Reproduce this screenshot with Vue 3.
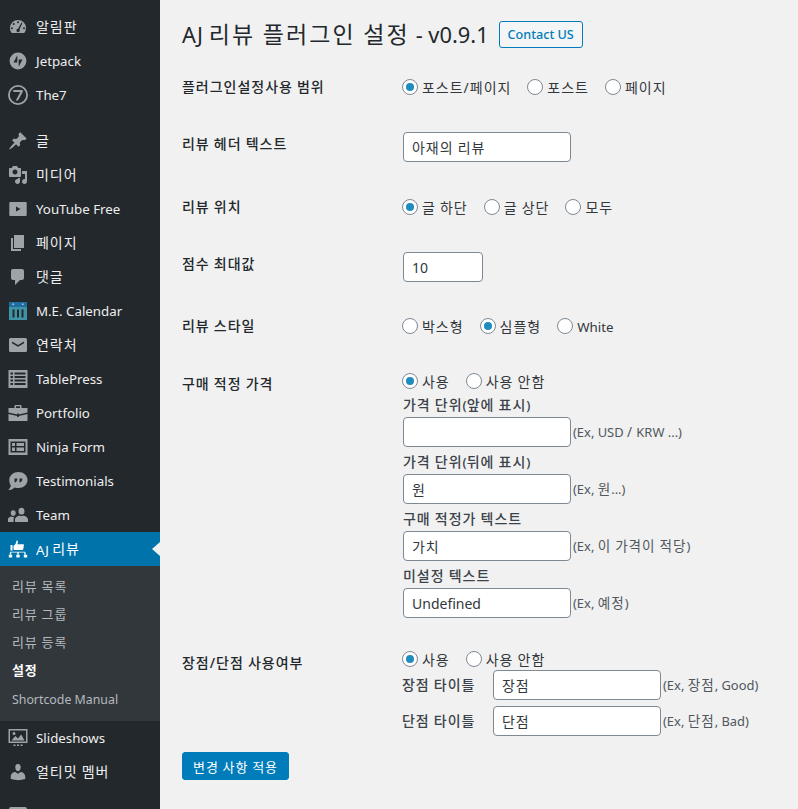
<script setup>
import { h } from 'vue'

const HAN = /([가-힣\/]+(?: [가-힣\/]+)*)/
const T = (props) => h('span', String(props.s).split(HAN).filter(Boolean).map((run) =>
  h('span', { class: HAN.test(run) ? 'han' : 'lat' }, run)
))
T.props = ['s']

const D = '#9ea3a8'
const menu = [
  { label: '알림판', icon: [{ d: 'M3.76 16h12.48A7.97 7.97 0 0 0 18 11a8 8 0 1 0-16 0c0 1.9.66 3.63 1.76 5zM10 4.2a1 1 0 1 1 0 2 1 1 0 0 1 0-2zM5.7 5.9a1 1 0 1 1 0 2 1 1 0 0 1 0-2zM4 10.2a1 1 0 1 1 0 2 1 1 0 0 1 0-2zM16 10.2a1 1 0 1 1 0 2 1 1 0 0 1 0-2zM13.5 5.6l.9.5-2.9 6.4a1.7 1.7 0 1 1-1.4-.7z' }] },
  { label: 'Jetpack', icon: [{ d: 'M10 1.6a8.4 8.4 0 1 0 0 16.800a8.4 8.4 0 0 0 0-16.800zM9.300 4.200v7.400H5.500zM10.700 15.800V8.400h3.800z' }] },
  { label: 'The7', icon: [{ d: 'M10 0a10 10 0 1 0 0 20a10 10 0 0 0 0-20zM10 1.800a8.200 8.200 0 1 1 0 16.400a8.200 8.200 0 0 1 0-16.400zM5.300 5h9.400v2L10 15.500H7.800L12.300 7H5.300z' }] },
  { label: '글', gap: true, icon: [{ d: 'M10.44 3.02l1.82-1.82 6.36 6.35-1.83 1.82c-1.05-.68-2.48-.57-3.41.36l-.75.75c-.92.93-1.04 2.35-.35 3.41l-1.83 1.82-2.41-2.41-2.8 2.79c-.42.42-3.38 2.71-3.8 2.29s1.86-3.39 2.28-3.81l2.79-2.79L4.1 9.36l1.83-1.82c1.05.69 2.48.57 3.4-.36l.75-.75c.93-.92 1.05-2.35.36-3.41z' }] },
  { label: '미디어', icon: [{ d: 'M13 11V4c0-.55-.45-1-1-1h-1.670L9 1H5L3.670 3H2c-.55 0-1 .45-1 1v7c0 .55.45 1 1 1h10c.55 0 1-.45 1-1zM7 4.500c1.380 0 2.500 1.120 2.500 2.500S8.380 9.500 7 9.500 4.500 8.380 4.500 7 5.620 4.500 7 4.500zM14 6h5v10.500c0 1.380-1.120 2.500-2.500 2.500S14 17.880 14 16.500s1.120-2.500 2.500-2.500c.17 0 .34.02.5.05V9h-3V6zm-4 8.050V13h2v3.500c0 1.380-1.120 2.500-2.500 2.500S7 17.880 7 16.500 8.120 14 9.500 14c.17 0 .34.02.5.05z' }] },
  { label: 'YouTube Free', icon: [{ d: 'M2.300 3h15.400a1 1 0 0 1 1 1v12a1 1 0 0 1-1 1H2.300a1 1 0 0 1-1-1V4a1 1 0 0 1 1-1zM8 7.500v5l4.500-2.500z' }] },
  { label: '페이지', icon: [{ d: 'M6 15V2h10v13H6zm-1 1h8v2H3V5h2v11z' }] },
  { label: '댓글', icon: [{ d: 'M5 2h9c1.100 0 2 .9 2 2v7c0 1.100-.9 2-2 2h-2l-5 5v-5H5c-1.100 0-2-.9-2-2V4c0-1.100.9-2 2-2z' }] },
  { label: 'M.E. Calendar', icon: [
    { d: 'M1 1h18v5H1z', fill: '#1f6da3' },
    { d: 'M1 6h18v13H1zM4.500 8.500v8h2v-8zM9 8.500v8h2v-8zM13.500 8.500v8h2v-8z', fill: '#3f93a6' },
    { d: 'M4.500 2.500h1.500v1.500H4.500zM14 2.500h1.500v1.500H14z', fill: '#b9d3e3' }
  ] },
  { label: '연락처', icon: [{ d: 'M2.500 3h15a1.500 1.500 0 0 1 1.500 1.500v11a1.500 1.500 0 0 1-1.500 1.500h-15A1.500 1.500 0 0 1 1 15.500v-11A1.500 1.500 0 0 1 2.500 3zM4 6.500v1.700l6 3.600 6-3.600V6.500l-6 3.400z' }] },
  { label: 'TablePress', icon: [{ d: 'M.5 1h19v18H.5zM2.500 3.500v2H5v-2zM6.500 3.500v2h11v-2zM2.500 7v2H5V7zM6.500 7v2h11V7zM2.500 10.500v2H5v-2zM6.500 10.500v2h11v-2zM2.500 14v2H5v-2zM6.500 14v2h11v-2z' }] },
  { label: 'Portfolio', icon: [{ d: 'M7.500 2h5a1 1 0 0 1 1 1v2H19.500v4.500L10.800 11.500v-1H9.200v1L.5 9.500V5h6V3a1 1 0 0 1 1-1zM8 3.300V5h4V3.300zM.5 11l8.700 2v1h1.600v-1L19.500 11v7H.5z' }] },
  { label: 'Ninja Form', icon: [{ d: 'M.5 2h19v16H.5zM2.500 4.500v11h15v-11zM8.500 6h7.500v3H8.500zM4 6h3v3H4zM4 10.500h3v3.500H4zM8.500 10.500h7.500v3.500H8.500z' }] },
  { label: 'Testimonials', icon: [{ d: 'M10.500 1c5 0 9 3.500 9 8s-4 8-9 8c-1.300 0-2.500-.2-3.600-.6C5 18 2.500 19 .3 19c1.300-1.300 2.300-3 2.500-4.600C1.700 13 1.300 11 1.300 9c0-4.500 4.200-8 9.200-8zM6.500 7.500v3.800h1.200c1-.8 1.600-2 1.600-3.800zM11.500 7.500v3.800h1.200c1-.8 1.600-2 1.600-3.800z' }] },
  { label: 'Team', icon: [{ d: 'M13.500 2.800a3 3.400 0 1 1 0 6.800a3 3.400 0 0 1 0-6.800zM7 17v-2.500c0-2.200 2.800-3.500 4.500-4 .8.700 3.200.7 4 0 1.700.5 4.500 1.800 4.500 4V17zM5.200 5.200a2.500 2.800 0 1 1 0 5.600a2.500 2.800 0 0 1 0-5.600zM0 17v-2.600c0-1.600 1.500-2.400 3.200-2.900.6.500 2.300.6 3.200.2C6 12.200 5.600 13 5.600 14.300V17z' }] },
  { label: 'AJ 리뷰', active: true, icon: [{ d: 'M8.500 1.500l1.200.3c.4 1 .1 2.200-.4 3.400h5.500c.8 0 1.200.5 1.200 1.100s-.3.900-.6 1.100c.4.300.5.700.4 1.100-.1.400-.3.700-.7.900.2.300.3.700.1 1.100-.2.300-.4.500-.8.600H6.800c-.9 0-1.300-.4-1.300-1V6.800c1.700-.9 2.800-3 3-5.300zM2.500 6h2v5.500h-2zM2.300 12.700H17v.9H2.300zM1.800 13.600h1.400v1.900H1.800zM9.300 13.600h1.400v1.900H9.300zM16.300 13.600h1.400v1.900h-1.400zM.8 15.800h3.400v2.700H.8zM8.300 15.800h3.400v2.700H8.300zM15.800 15.800h3.400v2.700h-3.400z', fill: '#fff' }] },
  { label: 'Slideshows', icon: [{ d: 'M.5 1h19v14H.5zM2 2.500v11h16v-11zM3.500 12.500l3.800-4.500 2.700 2.500 3.200-4 3.300 6zM6 4a1.500 1.500 0 1 1 0 3 1.500 1.500 0 0 1 0-3zM5.500 16.500h2v1.500h-2zM9 16.500h2v1.500H9zM12.500 16.500h2v1.500h-2z' }] },
  { label: '얼티밋 멤버', icon: [{ d: 'M10 9.250c-2.270 0-2.730-3.440-2.730-3.440C7 4.020 7.820 2 9.970 2c2.160 0 2.980 2.020 2.710 3.810 0 0-.41 3.440-2.680 3.440zm0 2.570L12.720 10c2.390 0 4.520 2.330 4.520 4.530v2.490s-3.650 1.130-7.240 1.130c-3.650 0-7.240-1.130-7.240-1.130v-2.490c0-2.250 1.940-4.480 4.470-4.480z' }] }
]
const subs = ['리뷰 목록', '리뷰 그룹', '리뷰 등록', '설정', 'Shortcode Manual']
const prices = [
  { label: '가격 단위(앞에 표시)', value: '', hint: '(Ex, USD / KRW ...)' },
  { label: '가격 단위(뒤에 표시)', value: '원', hint: '(Ex, 원...)' },
  { label: '구매 적정가 텍스트', value: '가치', hint: '(Ex, 이 가격이 적당)' },
  { label: '미설정 텍스트', value: 'Undefined', hint: '(Ex, 예정)' }
]
const titles = [
  { label: '장점 타이틀', value: '장점', hint: '(Ex, 장점, Good)' },
  { label: '단점 타이틀', value: '단점', hint: '(Ex, 단점, Bad)' }
]
const valueClass = (v) => (HAN.test(v) ? 'han' : 'latv')
</script>

<template>
  <div class="page">
    <aside class="side">
      <template v-for="m in menu" :key="m.label">
        <div class="item" :class="{ gap: m.gap, active: m.active }">
          <svg class="ico" viewBox="0 0 20 20" width="20" height="20">
            <path v-for="(p, i) in m.icon" :key="i" :d="p.d" :fill="p.fill || D" fill-rule="evenodd" />
          </svg>
          <T :s="m.label" />
          <i v-if="m.active" class="arrow"></i>
        </div>
        <div v-if="m.active" class="subs">
          <div v-for="s in subs" :key="s" class="sub" :class="{ on: s === '설정' }"><T :s="s" /></div>
        </div>
      </template>
      <div class="item last">
        <svg class="ico" viewBox="0 0 20 20" width="20" height="20"><path d="M3 0h14a2 2 0 0 1 2 2v16H1V2a2 2 0 0 1 2-2z" :fill="D" /></svg>
      </div>
    </aside>

    <main class="main">
      <div class="head">
        <h1><T s="AJ 리뷰 플러그인 설정" /> <T s="- v0.9.1" /></h1>
        <a class="contact"><T s="Contact US" /></a>
      </div>

      <div class="row r1">
        <div class="th"><T s="플러그인설정사용 범위" /></div>
        <div class="radios">
          <label><input type="radio" name="a" checked><T s="포스트/페이지" /></label>
          <label><input type="radio" name="a"><T s="포스트" /></label>
          <label><input type="radio" name="a"><T s="페이지" /></label>
        </div>
      </div>

      <div class="row r2">
        <div class="th"><T s="리뷰 헤더 텍스트" /></div>
        <input class="text han" type="text" value="아재의 리뷰">
      </div>

      <div class="row r3">
        <div class="th"><T s="리뷰 위치" /></div>
        <div class="radios">
          <label><input type="radio" name="b" checked><T s="글 하단" /></label>
          <label><input type="radio" name="b"><T s="글 상단" /></label>
          <label><input type="radio" name="b"><T s="모두" /></label>
        </div>
      </div>

      <div class="row r4">
        <div class="th"><T s="점수 최대값" /></div>
        <input class="text short latv" type="text" value="10">
      </div>

      <div class="row r5">
        <div class="th"><T s="리뷰 스타일" /></div>
        <div class="radios">
          <label><input type="radio" name="c"><T s="박스형" /></label>
          <label><input type="radio" name="c" checked><T s="심플형" /></label>
          <label><input type="radio" name="c"><T s="White" /></label>
        </div>
      </div>

      <div class="row r6">
        <div class="th"><T s="구매 적정 가격" /></div>
        <div>
          <div class="radios">
            <label><input type="radio" name="d" checked><T s="사용" /></label>
            <label><input type="radio" name="d"><T s="사용 안함" /></label>
          </div>
          <div v-for="p in prices" :key="p.label" class="price">
            <div class="cap"><T :s="p.label" /></div>
            <div class="line">
              <input class="text" :class="valueClass(p.value)" type="text" :value="p.value">
              <span class="hint"><T :s="p.hint" /></span>
            </div>
          </div>
        </div>
      </div>

      <div class="row r7">
        <div class="th"><T s="장점/단점 사용여부" /></div>
        <div>
          <div class="radios">
            <label><input type="radio" name="e" checked><T s="사용" /></label>
            <label><input type="radio" name="e"><T s="사용 안함" /></label>
          </div>
          <div v-for="t in titles" :key="t.label" class="title-line">
            <div class="cap w"><T :s="t.label" /></div>
            <input class="text han" type="text" :value="t.value">
            <span class="hint"><T :s="t.hint" /></span>
          </div>
        </div>
      </div>

      <button class="save" type="button"><T s="변경 사항 적용" /></button>
    </main>
  </div>
</template>

<style>
.han { letter-spacing: .07em; word-spacing: -.5px; }
.lat { font-size: .95em; }
.item .han { vertical-align: 2px; }
.item .lat { vertical-align: 1px; }
.sub .lat { vertical-align: -1px; }
h1 .han { letter-spacing: .09em; }
.text.latv { font-size: 13.3px; padding-bottom: 1px; }
</style>

<style scoped>
.page {
  display: flex;
  width: 798px;
  height: 809px;
  overflow: hidden;
  background: #f1f1f1;
  font-family: "Noto Sans", "Noto Sans CJK KR", sans-serif;
  font-size: 14px;
  color: #23282d;
}
.side {
  width: 160px;
  flex: none;
  background: #23282d;
  padding-top: 10px;
  overflow: hidden;
  box-sizing: border-box;
}
.item {
  height: 34px;
  display: flex;
  align-items: center;
  color: #eee;
  font-size: 14px;
  position: relative;
}
.item.gap { margin-top: 12px; }
.item.last { margin-top: 11px; }
.ico { margin: 0 8px; flex: none; }
.item.active { background: #0073aa; color: #fff; }
.arrow {
  position: absolute;
  right: 0;
  top: 10px;
  border: 7px solid transparent;
  border-right-color: #f1f1f1;
  border-right-width: 8px;
  border-left-width: 0;
}
.subs {
  background: #32373c;
  padding: 6px 0 9px;
}
.sub {
  height: 28px;
  line-height: 28px;
  padding-left: 12px;
  font-size: 13px;
  color: #b4b9be;
}
.sub.on { color: #fff; font-weight: 700; }
.main {
  flex: 1;
  padding: 0 0 0 22px;
}
.head {
  display: flex;
  align-items: center;
  height: 68px;
}
h1 {
  margin: 0;
  font-size: 23px;
  font-weight: 400;
  line-height: 30px;
}
.contact {
  margin-left: 10px;
  height: 27px;
  width: 84px;
  box-sizing: border-box;
  border: 1px solid #007cba;
  border-radius: 3px;
  color: #007cba;
  background: #f3f5f6;
  font-size: 13.3px;
  font-weight: 500;
  text-align: center;
  line-height: 25px;
}
.row { display: flex; align-items: flex-start; }
.th {
  width: 220px;
  flex: none;
  font-weight: 500;
  font-size: 14px;
  line-height: 20px;
}
.radios { display: flex; gap: 16px; height: 20px; }
.radios label { display: flex; align-items: center; color: #32373c; }
input[type=radio] {
  appearance: none;
  width: 16px;
  height: 16px;
  margin: 0 4px 0 0;
  border: 1px solid #7e8993;
  border-radius: 50%;
  background: #fff;
  box-sizing: border-box;
  position: relative;
}
input[type=radio]:checked::before {
  content: "";
  position: absolute;
  left: 3px;
  top: 3px;
  width: 8px;
  height: 8px;
  border-radius: 50%;
  background: #1e8cbe;
}
.text {
  width: 168px;
  height: 30px;
  box-sizing: border-box;
  border: 1px solid #7e8993;
  border-radius: 4px;
  background: #fff;
  padding: 0 8px;
  margin: 0 0 0 1px;
  font-family: inherit;
  font-size: 14px;
  color: #32373c;
}
.short { width: 80px; }
.r1 { padding-top: 9px; }
.r2 { margin-top: 35px; }
.r2 .th { padding-top: 2px; }
.r3 { margin-top: 35px; }
.r4 { margin-top: 35px; }
.r4 .th { padding-top: 2px; }
.r5 { margin-top: 34px; }
.r6 { margin-top: 35px; }
.r6 .th { padding-top: 3px; }
.r7 { margin-top: 31px; }
.r7 .th { padding-top: 4px; }
.price { margin-top: 4px; }
.price + .price { margin-top: 5px; }
.cap {
  font-weight: 500;
  font-size: 14px;
  line-height: 20px;
  margin-left: 1px;
  color: #3c434a;
}
.line { display: flex; align-items: center; margin-top: 2px; }
.hint { font-size: 13.6px; color: #50575e; margin-left: 2px; padding-bottom: 2px; }
.title-line { display: flex; align-items: center; margin-top: 6px; }
.radios + .title-line { margin-top: 1px; }
.cap.w { width: 90px; margin-left: 0; }
.save {
  display: block;
  margin-top: 16px;
  width: 107px;
  height: 28px;
  border: 1px solid #007cba;
  border-radius: 3px;
  background: #007cba;
  color: #fff;
  font-family: inherit;
  font-size: 13px;
  padding: 0;
}
</style>
